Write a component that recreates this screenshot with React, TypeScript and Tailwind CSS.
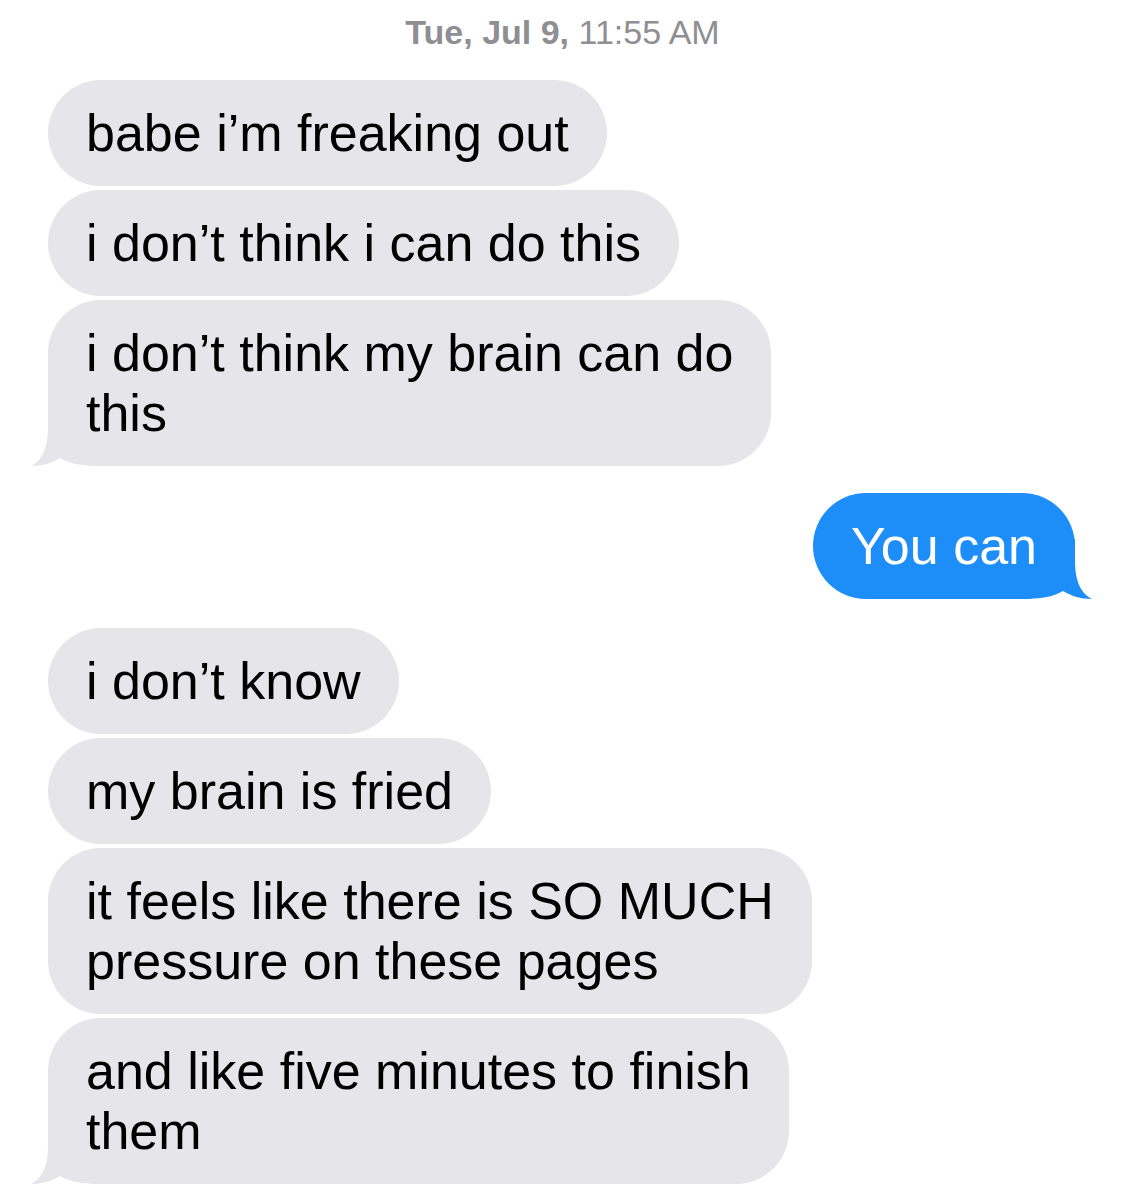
import type { ReactNode } from 'react'

const font = { fontFamily: '"Liberation Sans", Arial, sans-serif' }

function Tail({ side, color }: { side: 'left' | 'right'; color: string }) {
  // covers the bubble's rounded bottom corner and adds the little hook
  const pos = side === 'left' ? '-left-[17px]' : '-right-[17px] -scale-x-100'
  return (
    <svg
      className={`pointer-events-none absolute bottom-0 h-[60px] w-[80px] ${pos}`}
      viewBox="0 0 80 60"
      aria-hidden
    >
      <path
        d="M17 0 L17 22 C17 44 10 55 0 60 C11 60 21 57 29 52 C39 58 52 60 70 60 L80 60 L80 0 Z"
        fill={color}
      />
    </svg>
  )
}

function Incoming({ children, tail = false }: { children: ReactNode; tail?: boolean }) {
  return (
    <div className="flex justify-start pl-[48px]">
      <div className="relative whitespace-nowrap rounded-[53px] bg-[#e5e5ea] px-[38px] py-[23px] text-[52px] leading-[60px] text-black">
        {tail && <Tail side="left" color="#e5e5ea" />}
        <span className="relative">{children}</span>
      </div>
    </div>
  )
}

function Outgoing({ children }: { children: ReactNode }) {
  return (
    <div className="flex justify-end pr-[50px]">
      <div className="relative whitespace-nowrap rounded-[53px] bg-[#1d8ef8] px-[38px] py-[23px] text-[52px] leading-[60px] text-white">
        <Tail side="right" color="#1d8ef8" />
        <span className="relative">{children}</span>
      </div>
    </div>
  )
}

export default function App() {
  return (
    <div className="h-[1189px] w-[1125px] overflow-hidden bg-white pt-[12px]" style={font}>
      <div className="h-[40px] text-center text-[34px] leading-[40px] text-[#8e8e93]">
        <span className="font-bold">Tue, Jul 9,</span> 11:55 AM
      </div>

      <div className="mt-[28px] flex flex-col gap-[4px]">
        <Incoming>babe i’m freaking out</Incoming>
        <Incoming>i don’t think i can do this</Incoming>
        <Incoming tail>
          i don’t think my brain can do
          <br />
          this
        </Incoming>
      </div>

      <div className="mt-[27px]">
        <Outgoing>You can</Outgoing>
      </div>

      <div className="mt-[29px] flex flex-col gap-[4px]">
        <Incoming>i don’t know</Incoming>
        <Incoming>my brain is fried</Incoming>
        <Incoming>
          it feels like there is SO MUCH
          <br />
          pressure on these pages
        </Incoming>
        <Incoming tail>
          and like five minutes to finish
          <br />
          them
        </Incoming>
      </div>
    </div>
  )
}
